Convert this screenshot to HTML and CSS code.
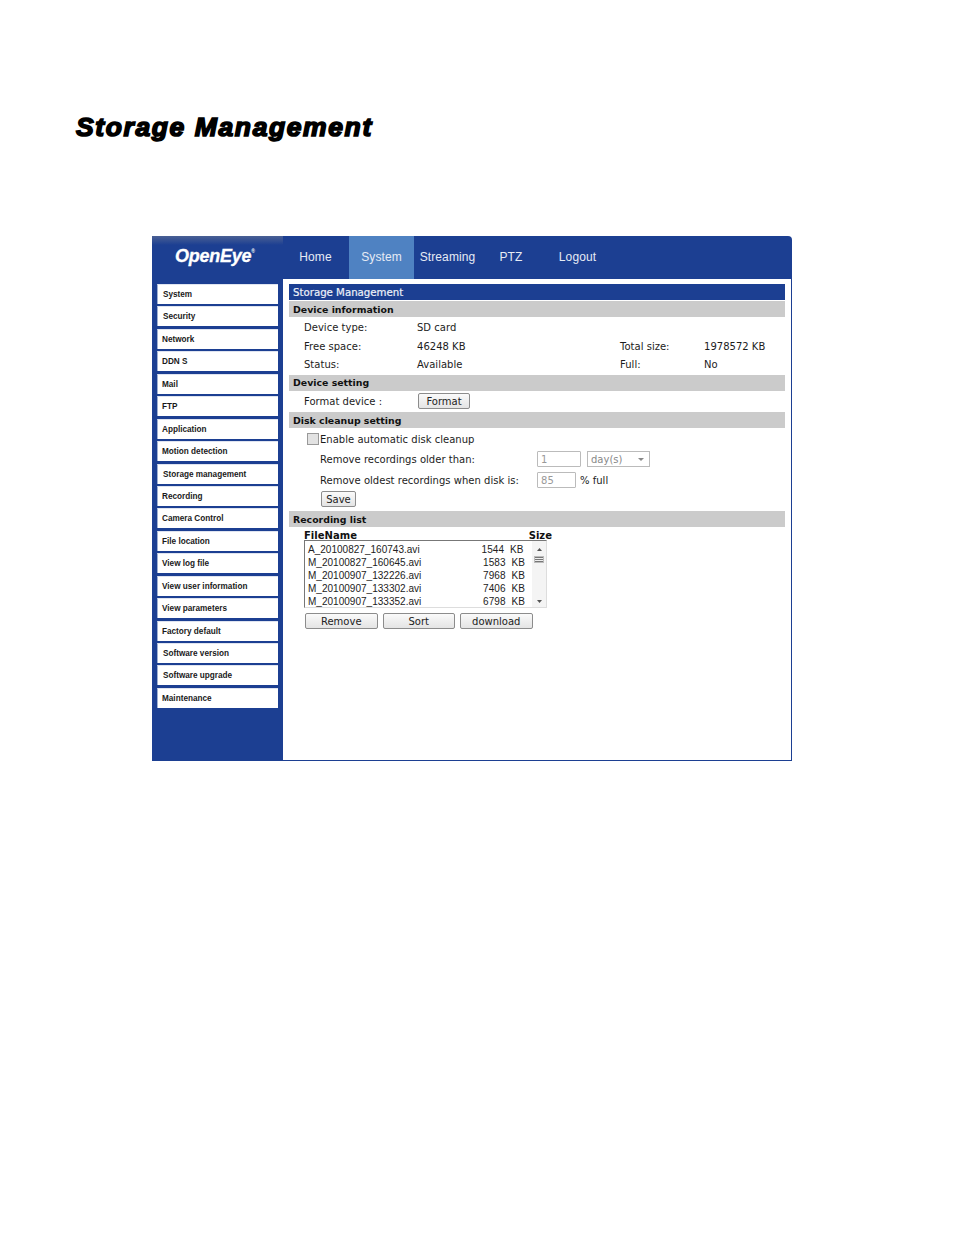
FILE: index.html
```html
<!DOCTYPE html>
<html lang="en">
<head>
<meta charset="utf-8">
<title>Storage Management</title>
<link rel="stylesheet" href="styles.css">
</head>
<body>
<h1 class="page-title">Storage Management</h1>
<div class="app">
  <header class="topbar">
    <div class="logo">OpenEye<sup class="reg">®</sup></div>
    <nav class="tabs">
      <a class="tab tab-home">Home</a>
      <a class="tab tab-system active">System</a>
      <a class="tab tab-streaming">Streaming</a>
      <a class="tab tab-ptz">PTZ</a>
      <a class="tab tab-logout">Logout</a>
    </nav>
  </header>
  <div class="body">
    <aside class="sidebar">
      <a class="side side-in">System</a>
      <a class="side side-in">Security</a>
      <a class="side">Network</a>
      <a class="side">DDN S</a>
      <a class="side">Mail</a>
      <a class="side">FTP</a>
      <a class="side">Application</a>
      <a class="side">Motion detection</a>
      <a class="side side-in">Storage management</a>
      <a class="side">Recording</a>
      <a class="side">Camera Control</a>
      <a class="side">File location</a>
      <a class="side">View log file</a>
      <a class="side">View user information</a>
      <a class="side">View parameters</a>
      <a class="side">Factory default</a>
      <a class="side side-in">Software version</a>
      <a class="side side-in">Software upgrade</a>
      <a class="side">Maintenance</a>
    </aside>
    <main class="content">
      <div class="title-bar">Storage Management</div>
      <div class="section-bar first">Device information</div>
      <div class="info">
        <span>Device type:</span><span>SD card</span><span></span><span></span>
        <span>Free space:</span><span>46248 KB</span><span>Total size:</span><span>1978572 KB</span>
        <span>Status:</span><span>Available</span><span>Full:</span><span>No</span>
      </div>
      <div class="section-bar">Device setting</div>
      <div class="format-row">
        <span class="format-label">Format device :</span>
        <button class="btn btn-format">Format</button>
      </div>
      <div class="section-bar section-low">Disk cleanup setting</div>
      <div class="cleanup">
        <label class="check-row"><span class="check"></span>Enable automatic disk cleanup</label>
        <div class="opt-row">
          <span class="opt-label">Remove recordings older than:</span>
          <span class="field field-days">1</span>
          <span class="select">day(s)<i class="caret"></i></span>
        </div>
        <div class="opt-row opt-row-2">
          <span class="opt-label">Remove oldest recordings when disk is:</span>
          <span class="field field-pct">85</span>
          <span class="pct">% full</span>
        </div>
        <button class="btn btn-save">Save</button>
      </div>
      <div class="section-bar section-low">Recording list</div>
      <div class="recording">
        <div class="list-head"><span>FileName</span><span class="size-head">Size</span></div>
        <div class="listbox">
          <div class="rows">
            <div class="row"><span>A_20100827_160743.avi</span><span class="row-size a">1544&nbsp;&nbsp;KB</span></div>
            <div class="row"><span>M_20100827_160645.avi</span><span class="row-size">1583&nbsp;&nbsp;KB</span></div>
            <div class="row"><span>M_20100907_132226.avi</span><span class="row-size">7968&nbsp;&nbsp;KB</span></div>
            <div class="row"><span>M_20100907_133302.avi</span><span class="row-size">7406&nbsp;&nbsp;KB</span></div>
            <div class="row"><span>M_20100907_133352.avi</span><span class="row-size">6798&nbsp;&nbsp;KB</span></div>
          </div>
          <div class="scrollbar">
            <svg class="arrow" width="5" height="3" viewBox="0 0 5 3"><path d="M2.5 0L5 3H0z" fill="#555"/></svg>
            <div class="thumb"></div>
            <svg class="arrow arrow-down" width="5" height="3" viewBox="0 0 5 3"><path d="M0 0H5L2.5 3z" fill="#555"/></svg>
          </div>
        </div>
        <div class="actions">
          <button class="btn btn-action">Remove</button>
          <button class="btn btn-action">Sort</button>
          <button class="btn btn-action">download</button>
        </div>
      </div>
    </main>
  </div>
</div>
</body>
</html>
```
FILE: styles.css
```css
html, body { margin: 0; padding: 0; background: #fff; }
body {
  width: 954px; height: 1248px; overflow: hidden;
  font-family: "DejaVu Sans", sans-serif; color: #1c1c1c;
}
.page-title {
  margin: 0; padding: 112px 0 0 76px; height: 236px; box-sizing: border-box;
  font: italic 700 26.5px/30px "Liberation Sans", sans-serif;
  letter-spacing: 1.6px; color: #000; -webkit-text-stroke: 1.6px #000;
}
.app { margin-left: 152px; width: 640px; height: 525px; display: flex; flex-direction: column; }
.topbar {
  height: 43px; display: flex; background: #1c3f92;
  border-radius: 0 4px 0 0; flex: none;
}
.logo {
  width: 131px; box-sizing: border-box; padding-left: 23px; color: #fff;
  font: italic 700 18px/41px "Liberation Sans", sans-serif; letter-spacing: -0.25px;
  -webkit-text-stroke: 0.3px #fff;
  background: linear-gradient(#4a6094 0, #1c3f92 9px);
}
.reg { font-size: 5px; line-height: 0; vertical-align: 9px; font-style: normal; -webkit-text-stroke: 0; }
.tabs { display: flex; }
.tab {
  display: flex; align-items: center; justify-content: center; color: #e6ebf5;
  font: 12px "Liberation Sans", sans-serif; letter-spacing: 0.1px; height: 43px;
  box-sizing: border-box; padding-bottom: 1px;
}
.tab-home { width: 66px; padding-right: 1px; }
.tab-system { width: 65px; }
.tab-streaming { width: 66px; padding-left: 1px; }
.tab-ptz { width: 62px; }
.tab-logout { width: 71px; }
.active { background: #4f82c2; }
.body { flex: 1; display: flex; min-height: 0; }
.sidebar {
  width: 131px; box-sizing: border-box; background: #1c3f92; padding: 5px 5px 0;
  display: flex; flex-direction: column; gap: 2.44px;
}
.side {
  height: 20px; background: #fff; border-left: 1px solid #9fb0d2; border-top: 1px solid #dfe4f0;
  box-sizing: border-box; padding-left: 4px;
  font: 700 8.2px/19px "Liberation Sans", sans-serif; letter-spacing: 0; color: #1a1a1a;
}
.side-in { padding-left: 5px; }
.content {
  flex: 1; box-sizing: border-box; padding: 5px 6px 0; background: #fff;
  border-right: 1px solid #1c3f92; border-bottom: 1px solid #1c3f92;
  font-size: 10px; letter-spacing: 0.02px;
}
.title-bar {
  background: #1c3f92; color: #eef1f8; height: 16px; padding-left: 4px;
  font: 400 10.2px/17px "DejaVu Sans", sans-serif; letter-spacing: 0; -webkit-text-stroke: 0.2px #eef1f8;
}
.section-bar {
  background: #cbcbcb; height: 16px; padding-left: 4px; color: #111;
  font: 700 9.4px/16px "DejaVu Sans", sans-serif; letter-spacing: 0;
}
.section-bar.first { margin-top: 1px; line-height: 17px; }
.section-low { line-height: 18px; }
.info {
  display: grid; grid-template-columns: 113px 203px 84px 1fr; grid-auto-rows: 18.5px;
  padding: 2px 0 0 15px; line-height: 18.5px; height: 57.5px; box-sizing: border-box;
}
.format-row { height: 21.5px; display: flex; align-items: center; padding-left: 15px; }
.format-label { width: 114px; }
.btn {
  padding: 0; margin: 0; background: linear-gradient(#fafafa, #e4e4e4); border: 1px solid #8c8c8c;
  border-radius: 2px; font: 10px "DejaVu Sans", sans-serif; color: #222; display: block;
}
.btn-format { width: 52px; height: 16px; }
.cleanup { height: 83px; box-sizing: border-box; padding: 3px 0 0 18px; }
.check-row { display: flex; align-items: center; height: 16px; }
.check { width: 10px; height: 10px; border: 1px solid #999; background: #e2e2e2; margin-right: 1px; }
.opt-row { display: flex; align-items: center; height: 20px; padding-left: 13px; margin-top: 2px; }
.opt-row-2 { margin-top: 1px; }
.opt-label { width: 217px; }
.field {
  box-sizing: border-box; height: 16px; border: 1px solid #bbb; color: #999; padding-left: 3px;
  line-height: 16px; border-radius: 1px;
}
.field-days { width: 44px; margin-right: 6px; }
.field-pct { width: 39px; margin-right: 4px; }
.select {
  position: relative; box-sizing: border-box; width: 63px; height: 16px; border: 1px solid #bbb; color: #888;
  padding-left: 3px; line-height: 16px;
}
.caret {
  position: absolute; right: 5px; top: 6px; width: 0; height: 0;
  border: 3px solid transparent; border-top-color: #888; border-bottom: 0;
}
.btn-save { width: 35px; height: 16px; margin: 1px 0 0 14px; }
.recording { padding: 3px 0 0 15px; }
.list-head {
  display: flex; width: 248px; justify-content: space-between; font-weight: 700; line-height: 12px; height: 10px;
  color: #111;
}
.listbox {
  width: 243px; height: 68px; box-sizing: border-box; display: flex;
  border: 1px solid #aaa; border-left: 1px solid #777; border-top: 1px solid #777; border-right-color: #ddd; border-bottom-color: #ddd;
}
.rows { width: 227px; padding: 2px 0 0 3px; box-sizing: border-box; }
.row {
  display: flex; justify-content: space-between; height: 13px;
  font: 10px/13px "Liberation Sans", sans-serif; padding-right: 7px; color: #222;
}
.row-size { font-size: 10px; letter-spacing: 0.1px; }
.row-size.a { margin-right: 1.5px; }
.scrollbar {
  flex: 1; background: #f4f4f4; display: flex; flex-direction: column; align-items: center;
  padding-top: 7px;
}
.thumb { width: 10px; height: 7px; margin: 5px 0 0; background: repeating-linear-gradient(#777 0 1px, #eee 1px 2px); border: 1px solid #bbb; box-sizing: border-box; }
.arrow-down { margin-top: auto; margin-bottom: 4px; }
.actions { display: flex; gap: 5px; margin-top: 5px; padding-left: 1px; }
.btn-action { width: 72.5px; height: 16px; }
```
